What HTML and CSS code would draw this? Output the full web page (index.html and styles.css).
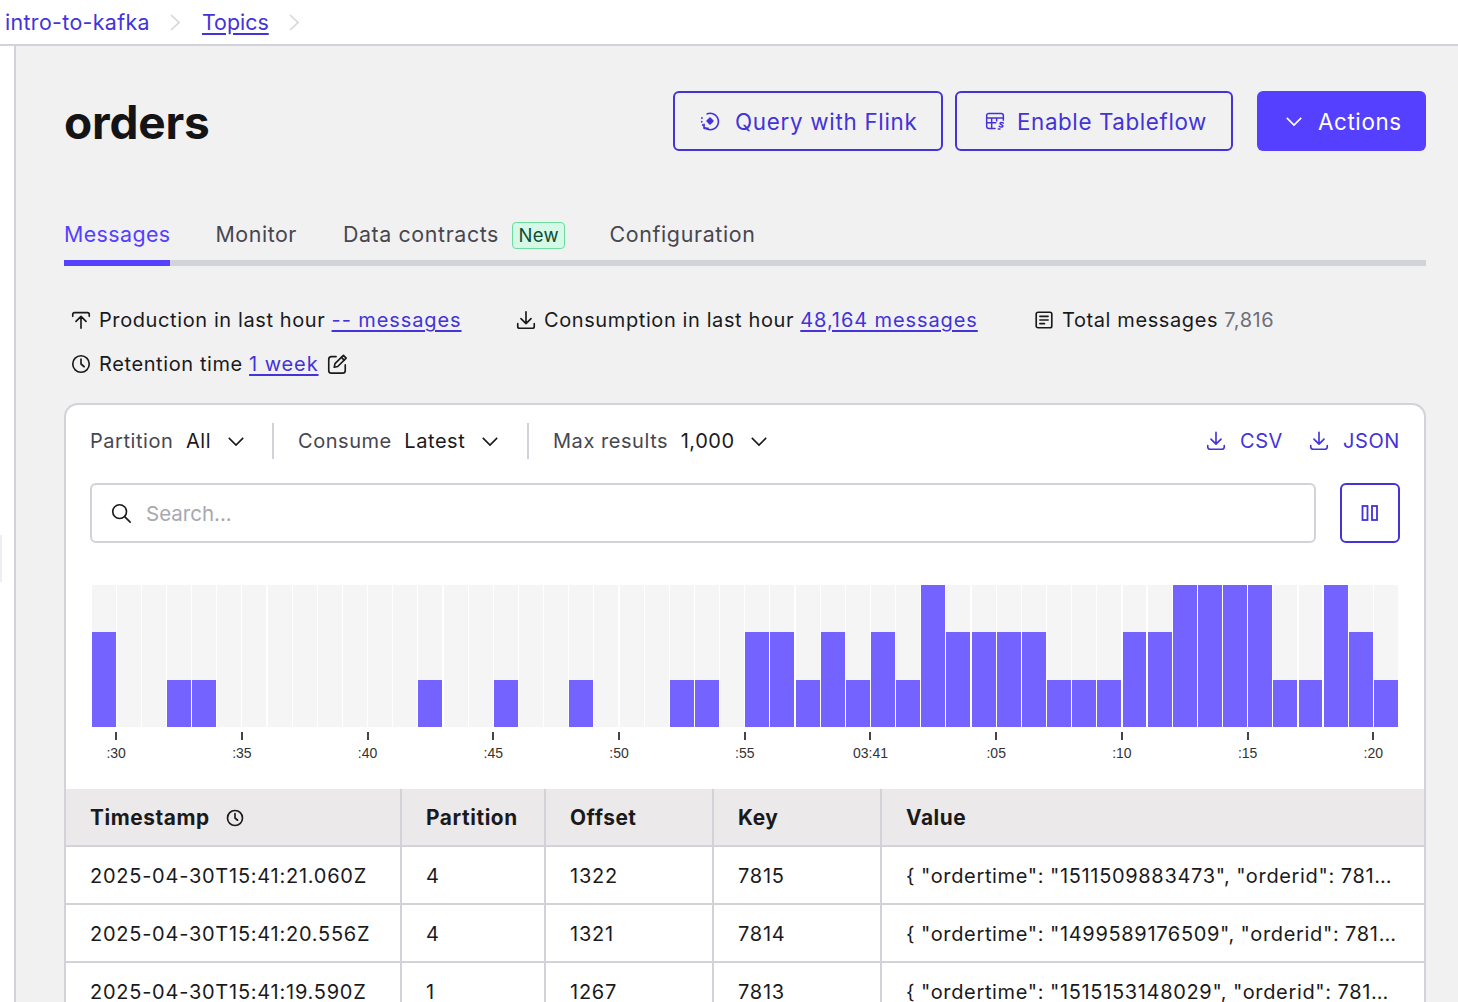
FILE: index.html
```html
<!DOCTYPE html>
<html lang="en">
<head>
<meta charset="utf-8">
<title>orders</title>
<link rel="stylesheet" href="styles.css">
</head>
<body>
<header class="crumbs">
  <a class="crumb">intro-to-kafka</a>
  <svg class="crumb-sep" viewBox="0 0 10 17"><path d="M1 1l8 7.500-8 7.500"/></svg>
  <a class="crumb crumb-link">Topics</a>
  <svg class="crumb-sep" viewBox="0 0 10 17"><path d="M1 1l8 7.500-8 7.500"/></svg>
</header>
<div class="shell">
  <aside class="rail"><span class="rail-handle"></span></aside>
  <main class="main">
    <div class="title-row">
      <h1 class="title">orders</h1>
      <div class="actions">
        <button class="btn btn-outline btn-flink">
          <svg class="ico ico-lg" viewBox="0 0 24 24"><path d="M9 4.200A9 9 0 1 1 6.500 19.500" /><path d="M3.200 8.500v.6M3 12.500v.6M4 16.200l.3.5" /><path d="M5.500 15.500v4.500h4.500" /><path d="M12 8.800l3.200 3.200-3.200 3.200-3.200-3.200z" class="fill"/></svg>
          <span>Query with Flink</span>
        </button>
        <button class="btn btn-outline btn-table">
          <svg class="ico" viewBox="0 0 24 24"><path d="M12 21H4.500A2.500 2.500 0 0 1 2 18.500V5.500A2.500 2.500 0 0 1 4.500 3h15A2.500 2.500 0 0 1 22 5.500V11" /><path d="M2 8.500h20M2 14h11M8 8.500V21M14 8.500V12" /><path d="M22 14.500c-1-1-3.500-1-4 .3-.5 1.500 3.800 1.500 3.500 3.200-.3 1.600-3 1.600-4.500.3M16 21.500h2" /></svg>
          <span>Enable Tableflow</span>
        </button>
        <button class="btn btn-solid">
          <svg class="chev" viewBox="0 0 20 12"><path d="M2 2l8 8 8-8"/></svg>
          <span>Actions</span>
        </button>
      </div>
    </div>

    <nav class="tabs">
      <a class="tab tab-active">Messages</a>
      <a class="tab tab-monitor">Monitor</a>
      <a class="tab tab-badged"><span>Data contracts</span><span class="badge">New</span></a>
      <a class="tab">Configuration</a>
    </nav>

    <div class="stats">
      <div class="stat stat-first">
        <svg class="ico ico-lg ico-dark" viewBox="0 0 24 24"><path d="M3 8V6a2 2 0 0 1 2-2h14a2 2 0 0 1 2 2v2M12 21V8M6.500 13.500L12 8l5.500 5.500"/></svg>
        <span>Production in last hour <a class="link">-- messages</a></span>
      </div>
      <div class="stat stat-second">
        <svg class="ico ico-lg ico-dark" viewBox="0 0 24 24"><path d="M12 3v13M6.500 10.500L12 16l5.500-5.500M3 16v3a2 2 0 0 0 2 2h14a2 2 0 0 0 2-2v-3"/></svg>
        <span>Consumption in last hour <a class="link">48,164 messages</a></span>
      </div>
      <div class="stat stat-third">
        <svg class="ico ico-lg ico-dark" viewBox="0 0 24 24"><rect x="3.500" y="3.500" width="17" height="17" rx="2"/><path d="M7.500 8h9M7.500 12h9M7.500 16h5"/></svg>
        <span>Total messages <span class="muted">7,816</span></span>
      </div>
    </div>
    <div class="stats stats-second">
      <div class="stat stat-first">
        <svg class="ico ico-lg ico-dark" viewBox="0 0 24 24"><circle cx="12" cy="12" r="9"/><path d="M12 6.500V12l3.500 3"/></svg>
        <span>Retention time <a class="link">1 week</a></span>
        <svg class="ico ico-lg ico-dark" viewBox="0 0 24 24"><path d="M11 4H6a3 3 0 0 0-3 3v12a3 3 0 0 0 3 3h12a3 3 0 0 0 3-3v-6"/><path d="M9 15.500l.8-4L19 2.500l3 3-9.200 9.200z"/><path d="M16.800 4.700l3 3"/></svg>
      </div>
    </div>

    <section class="card">
      <div class="filters">
        <div class="filter filter-a"><span class="filter-label">Partition</span><span class="filter-value">All</span><svg class="chev chev-dark" viewBox="0 0 20 12"><path d="M2 2l8 8 8-8"/></svg></div>
        <div class="filter filter-b"><span class="filter-label">Consume</span><span class="filter-value">Latest</span><svg class="chev chev-dark" viewBox="0 0 20 12"><path d="M2 2l8 8 8-8"/></svg></div>
        <div class="filter filter-c"><span class="filter-label">Max results</span><span class="filter-value">1,000</span><svg class="chev chev-dark" viewBox="0 0 20 12"><path d="M2 2l8 8 8-8"/></svg></div>
        <div class="downloads">
          <a class="dl"><svg class="ico ico-lg" viewBox="0 0 24 24"><path d="M12 2.500v13M6.500 10L12 15.500 17.500 10M3 17v1.500A2.500 2.500 0 0 0 5.500 21h13a2.500 2.500 0 0 0 2.500-2.500V17"/></svg><span>CSV</span></a>
          <a class="dl"><svg class="ico ico-lg" viewBox="0 0 24 24"><path d="M12 2.500v13M6.500 10L12 15.500 17.500 10M3 17v1.500A2.500 2.500 0 0 0 5.500 21h13a2.500 2.500 0 0 0 2.500-2.500V17"/></svg><span>JSON</span></a>
        </div>
      </div>
      <div class="search-row">
        <div class="search">
          <svg class="ico ico-lg ico-dark" viewBox="0 0 24 24"><circle cx="10.500" cy="10.500" r="7.500"/><path d="M16 16l6 6"/></svg>
          <span class="placeholder">Search...</span>
        </div>
        <button class="pause" aria-label="Pause"><svg viewBox="0 0 18 16"><rect x="1.500" y="1" width="5" height="14"/><rect x="11" y="1" width="5" height="14"/></svg></button>
      </div>

      <div class="chart">
        <div class="bars">
          <div class="bar v2"></div><div class="bar"></div><div class="bar"></div><div class="bar v1"></div><div class="bar v1"></div><div class="bar"></div><div class="bar"></div><div class="bar"></div><div class="bar"></div><div class="bar"></div><div class="bar"></div><div class="bar"></div><div class="bar"></div><div class="bar v1"></div><div class="bar"></div><div class="bar"></div><div class="bar v1"></div><div class="bar"></div><div class="bar"></div><div class="bar v1"></div><div class="bar"></div><div class="bar"></div><div class="bar"></div><div class="bar v1"></div><div class="bar v1"></div><div class="bar"></div><div class="bar v2"></div><div class="bar v2"></div><div class="bar v1"></div><div class="bar v2"></div><div class="bar v1"></div><div class="bar v2"></div><div class="bar v1"></div><div class="bar v3"></div><div class="bar v2"></div><div class="bar v2"></div><div class="bar v2"></div><div class="bar v2"></div><div class="bar v1"></div><div class="bar v1"></div><div class="bar v1"></div><div class="bar v2"></div><div class="bar v2"></div><div class="bar v3"></div><div class="bar v3"></div><div class="bar v3"></div><div class="bar v3"></div><div class="bar v1"></div><div class="bar v1"></div><div class="bar v3"></div><div class="bar v2"></div><div class="bar v1"></div>
        </div>
        <div class="axis">
          <span class="tick t0">:30</span><span class="tick t1">:35</span><span class="tick t2">:40</span><span class="tick t3">:45</span><span class="tick t4">:50</span><span class="tick t5">:55</span><span class="tick t6">03:41</span><span class="tick t7">:05</span><span class="tick t8">:10</span><span class="tick t9">:15</span><span class="tick t10">:20</span>
        </div>
      </div>

      <table class="table">
        <colgroup><col class="c1"><col class="c2"><col class="c3"><col class="c3"><col></colgroup>
        <thead>
          <tr>
            <th><span class="th-inner"><span>Timestamp</span><svg class="ico ico-dark ico-th" viewBox="0 0 24 24"><circle cx="12" cy="12" r="10"/><path d="M12 6v6l3.500 3"/></svg></span></th>
            <th>Partition</th><th>Offset</th><th>Key</th><th>Value</th>
          </tr>
        </thead>
        <tbody>
          <tr><td>2025-04-30T15:41:21.060Z</td><td>4</td><td>1322</td><td>7815</td><td>{ "ordertime": "1511509883473", "orderid": 7815, "itemid": "Item_3" }</td></tr>
          <tr><td>2025-04-30T15:41:20.556Z</td><td>4</td><td>1321</td><td>7814</td><td>{ "ordertime": "1499589176509", "orderid": 7814, "itemid": "Item_5" }</td></tr>
          <tr><td>2025-04-30T15:41:19.590Z</td><td>1</td><td>1267</td><td>7813</td><td>{ "ordertime": "1515153148029", "orderid": 7813, "itemid": "Item_8" }</td></tr>
        </tbody>
      </table>
    </section>
  </main>
</div>
</body>
</html>
```

FILE: styles.css
```css
* { box-sizing: border-box; }
html, body { height: 100%; margin: 0; overflow: hidden; }
body { font-family: Inter, "Liberation Sans", sans-serif; font-size: 20px; letter-spacing: 0.6px; color: #1a1a1c; background: #fff; }
a { color: inherit; }

.crumbs { height: 46px; border-bottom: 2px solid #d2d2d9; display: flex; align-items: center; padding-left: 5px; background: #fff; }
.crumb { color: #4333d8; font-size: 21.4px; letter-spacing: 0.35px; }
.crumb-link { letter-spacing: 0; text-decoration: underline; text-underline-offset: 3px; }
.crumb-sep { width: 10px; height: 17px; margin: 0 22px 0 20px; fill: none; stroke: #d6d6dc; stroke-width: 1.600; }

.shell { display: flex; height: calc(100vh - 46px); }
.rail { width: 16px; flex: none; border-right: 2px solid #d2d2d9; background: #fff; position: relative; }
.rail-handle { position: absolute; left: 0; top: 489px; width: 2px; height: 47px; background: #eeeeef; }
.main { flex: 1; background: #f1f1f2; padding: 45px 32px 0 48px; min-width: 0; }

.title-row { display: flex; justify-content: space-between; align-items: center; height: 60px; }
.title { margin: 2px 0 0; font-size: 46px; font-weight: 700; color: #141416; letter-spacing: -0.2px; line-height: 1; }
.actions { display: flex; }
.btn { height: 60px; display: flex; align-items: center; border-radius: 6px; font: inherit; font-size: 22.4px; letter-spacing: 0.6px; padding: 0; }
.btn-outline { background: transparent; border: 2px solid #4333d8; color: #4333d8; margin-right: 12px; }
.btn-flink { width: 270px; padding-left: 24px; gap: 14px; letter-spacing: 0.7px; }
.btn-table { width: 278px; padding-left: 28px; gap: 12px; margin-right: 24px; }
.btn-solid { width: 169px; background: #5540ff; border: 0; color: #fff; padding-left: 28px; gap: 15px; }

.ico { width: 20px; height: 20px; flex: none; fill: none; stroke: #4333d8; stroke-width: 1.800; stroke-linecap: round; stroke-linejoin: round; }
.ico-lg { width: 22px; height: 22px; stroke-width: 1.800; }
.ico .fill { fill: #4333d8; }
.ico-dark { stroke: #1a1a1c; }
.chev { width: 18px; height: 11px; fill: none; stroke: #fff; stroke-width: 1.800; flex: none; }
.chev-dark { stroke: #1a1a1c; }

.tabs { display: flex; height: 56px; margin-top: 59px; border-bottom: 6px solid #d2d2d9; align-items: flex-start; }
.tab { position: relative; height: 56px; display: flex; align-items: center; padding-bottom: 8px; color: #47474f; margin-right: 46px; font-size: 21.4px; letter-spacing: 0.65px; white-space: pre; }
.tab-monitor { letter-spacing: 0.55px; }
.tab-badged { margin-right: 44px; letter-spacing: 0.6px; }
.tab-active { color: #5540ff; letter-spacing: 0.4px; margin-right: 45px; }
.tab-active::after { content: ""; position: absolute; left: 0; right: 0; bottom: 0; height: 6px; background: #5540ff; }
.badge { display: inline-block; margin: 2px 0 0 13px; height: 27px; padding: 0 5.5px; line-height: 25px; font-size: 18.500px; letter-spacing: 0.3px; color: #0f4d33; background: #d6f8e6; border: 1px solid #6ddc9f; border-radius: 4px; }

.stats { display: flex; height: 30px; align-items: center; margin-top: 39px; padding-left: 6px; }
.stats-second { margin-top: 14px; }
.stat { display: flex; align-items: center; gap: 7px; white-space: pre; }
.stat-first { width: 445px; }
.stat-second { width: 518px; }
.link { color: #4333d8; letter-spacing: 0.9px; text-decoration: underline; text-underline-offset: 3px; text-decoration-thickness: 2px; }
.muted { color: #6f6f7a; }

.card { margin-top: 24px; background: #fff; border: 2px solid #d2d2d9; border-bottom: 0; border-radius: 14px 14px 0 0; height: 700px; overflow: hidden; }
.filters { display: flex; align-items: center; height: 36px; margin-top: 18px; padding: 0 24px; }
.filter { display: flex; align-items: center; height: 36px; white-space: pre; letter-spacing: 0.55px; }
.filter-a { width: 182px; }
.filter-b { width: 255px; border-left: 2px solid #d2d2d9; padding-left: 24px; }
.filter-c { border-left: 2px solid #d2d2d9; padding-left: 24px; }
.filter-label { color: #47474f; margin-right: 12.5px; }
.filter-value { margin-right: 15.5px; }
.downloads { margin-left: auto; display: flex; gap: 25px; }
.dl { display: flex; align-items: center; gap: 13px; color: #4333d8; }

.search-row { display: flex; gap: 24px; margin-top: 24px; padding: 0 24px; }
.search { flex: 1; height: 60px; border: 2px solid #d2d2d9; border-radius: 6px; display: flex; align-items: center; gap: 14px; padding-left: 18px; }
.placeholder { color: #a8a8b0; font-size: 20.5px; letter-spacing: 0; }
.pause { width: 60px; height: 60px; border: 2px solid #4333d8; border-radius: 6px; background: #fff; display: flex; align-items: center; justify-content: center; padding: 0; }
.pause svg { width: 18px; height: 16px; fill: none; stroke: #4333d8; stroke-width: 1.800; }

.chart { margin: 42px 25.5px 0 25px; height: 204px; }
.bars { display: grid; grid-template-columns: repeat(52, 1fr); height: 142px; align-items: stretch; }
.bar { background: #f5f5f5; margin: 0 0.6px; position: relative; }
.bar.v1::after, .bar.v2::after, .bar.v3::after { content: ""; position: absolute; left: 0; right: 0; bottom: 0; background: #7563ff; }
.bar.v1::after { height: 47px; }
.bar.v2::after { height: 95px; }
.bar.v3::after { height: 142px; }
.axis { display: grid; grid-template-columns: repeat(52, 1fr); margin-top: 5px; }
.tick { grid-row: 1; grid-column-end: span 2; font: 14px "Liberation Sans", Arial, sans-serif; letter-spacing: 0; color: #333; text-align: center; white-space: nowrap; padding-top: 13px; position: relative; }
.tick::before { content: ""; position: absolute; top: 0; left: 50%; width: 2px; margin-left: -1px; height: 8px; background: #444; }
.t0 { grid-column-start: 1; } .t1 { grid-column-start: 6; } .t2 { grid-column-start: 11; } .t3 { grid-column-start: 16; } .t4 { grid-column-start: 21; } .t5 { grid-column-start: 26; } .t6 { grid-column-start: 31; } .t7 { grid-column-start: 36; } .t8 { grid-column-start: 41; } .t9 { grid-column-start: 46; } .t10 { grid-column-start: 51; }

.table { width: 100%; table-layout: fixed; border-collapse: separate; border-spacing: 0; }
.c1 { width: 336px; }
.c2 { width: 144px; }
.c3 { width: 168px; }
th, td { height: 58px; padding: 1px 24px 0; text-align: left; border-bottom: 2px solid #d2d2d9; border-right: 2px solid #d2d2d9; white-space: nowrap; overflow: hidden; text-overflow: ellipsis; font-weight: 400; letter-spacing: 0.75px; }
td { padding-top: 2px; }
td:last-child { letter-spacing: 0.66px; word-spacing: -0.5px; }
th:last-child, td:last-child { border-right: 0; }
th { background: #ebe9ea; font-weight: 700; padding-right: 0; font-size: 20.8px; letter-spacing: 0.6px; }
.th-inner { display: flex; align-items: center; gap: 16px; }
.ico-th { width: 18px; height: 18px; stroke-width: 2.200; }
```
